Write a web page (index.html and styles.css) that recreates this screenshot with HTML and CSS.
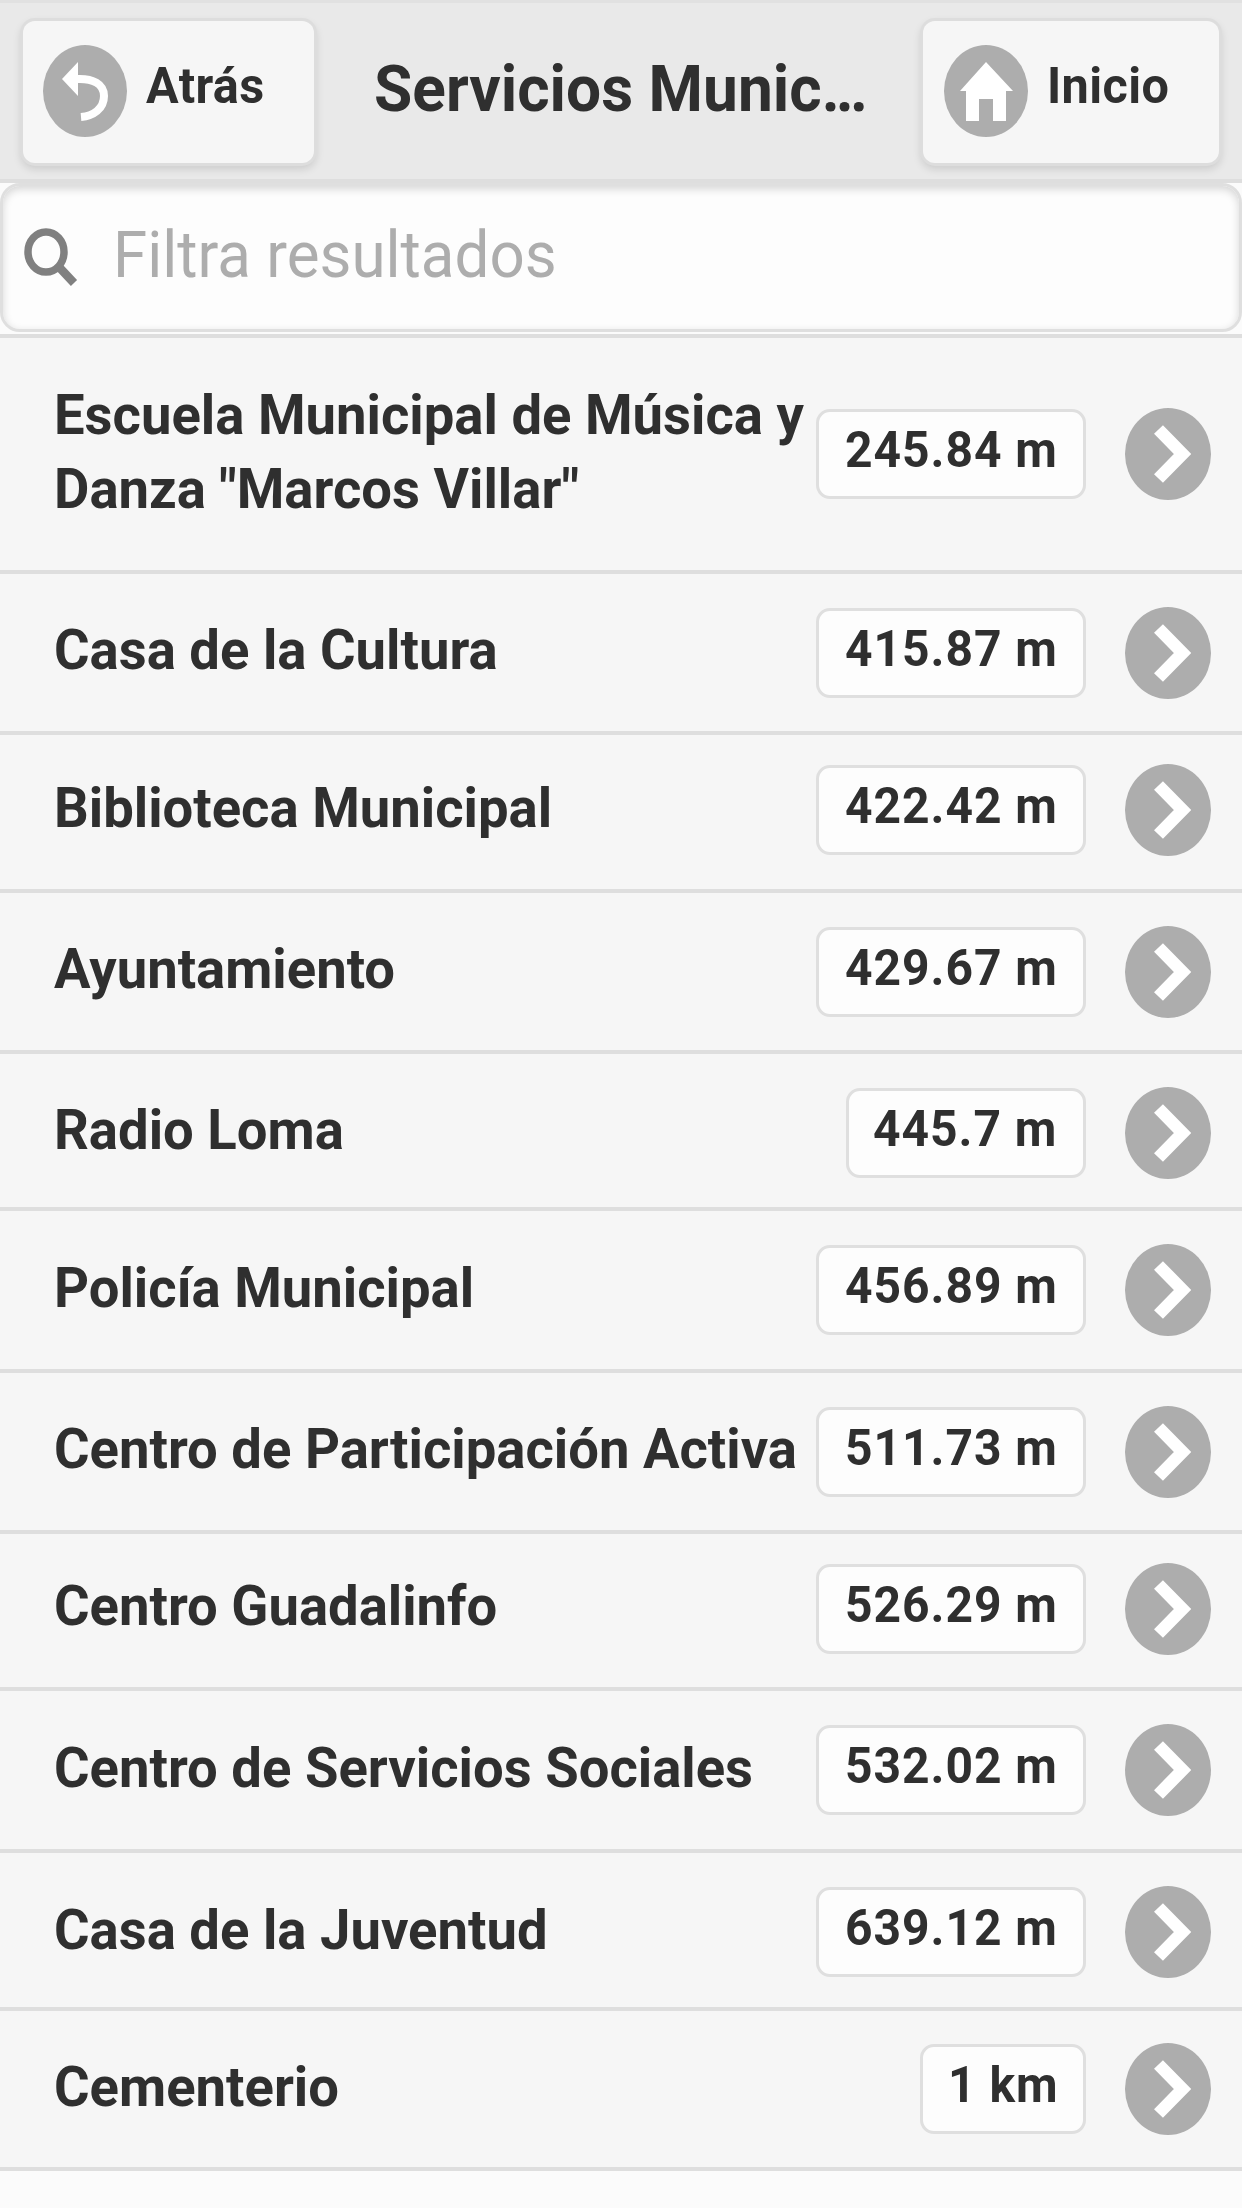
FILE: index.html
```html
<!DOCTYPE html>
<html lang="es">
<head>
<meta charset="utf-8">
<title>Servicios Municipales</title>
<link rel="stylesheet" href="styles.css">
</head>
<body>
<svg class="defs" aria-hidden="true">
  <symbol id="go" viewBox="0 0 86 92"><ellipse cx="43" cy="46" rx="43" ry="46" fill="#adadad"/><path d="M33.500 21.500 L57.500 46 L33.500 70.500" fill="none" stroke="#fff" stroke-width="12.500"/></symbol>
</svg>
<header class="bar">
  <a class="btn back">
    <svg class="disc" viewBox="0 0 84 92"><ellipse cx="42" cy="46" rx="42" ry="46" fill="#adadad"/><path d="M19 34 L35 17 V51 Z" fill="#fff"/><path d="M33 34 C50 33 61 39 61 51 C61 64 50 71 38 72" fill="none" stroke="#fff" stroke-width="8"/></svg>
    <span class="label">Atrás</span>
  </a>
  <h1 class="title"><span>Servicios Munic<i class="dots">...</i></span></h1>
  <a class="btn home">
    <svg class="disc" viewBox="0 0 84 92"><ellipse cx="42" cy="46" rx="42" ry="46" fill="#adadad"/><path d="M42 17 L69 46 H62 V76 H49 V54 H35 V76 H22 V46 H16 Z" fill="#fff"/></svg>
    <span class="label">Inicio</span>
  </a>
</header>
<div class="search">
  <svg class="lens" viewBox="0 0 54 60"><ellipse cx="22" cy="24" rx="18" ry="20" fill="none" stroke="#808080" stroke-width="7.500"/><path d="M34 38 L50 55" stroke="#808080" stroke-width="8.500"/></svg>
  <span class="hint">Filtra resultados</span>
</div>
<ul class="list">
  <li class="row"><span class="name">Escuela Municipal de Música y<br>Danza "Marcos Villar"</span><span class="count"><b>245.84 m</b></span><svg class="go"><use href="#go"/></svg></li>
  <li class="row"><span class="name">Casa de la Cultura</span><span class="count"><b>415.87 m</b></span><svg class="go"><use href="#go"/></svg></li>
  <li class="row raised"><span class="name">Biblioteca Municipal</span><span class="count"><b>422.42 m</b></span><svg class="go"><use href="#go"/></svg></li>
  <li class="row"><span class="name">Ayuntamiento</span><span class="count"><b>429.67 m</b></span><svg class="go"><use href="#go"/></svg></li>
  <li class="row lowered"><span class="name">Radio Loma</span><span class="count medium"><b>445.7 m</b></span><svg class="go"><use href="#go"/></svg></li>
  <li class="row"><span class="name">Policía Municipal</span><span class="count"><b>456.89 m</b></span><svg class="go"><use href="#go"/></svg></li>
  <li class="row"><span class="name">Centro de Participación Activa</span><span class="count"><b>511.73 m</b></span><svg class="go"><use href="#go"/></svg></li>
  <li class="row raised"><span class="name">Centro Guadalinfo</span><span class="count"><b>526.29 m</b></span><svg class="go"><use href="#go"/></svg></li>
  <li class="row"><span class="name">Centro de Servicios Sociales</span><span class="count"><b>532.02 m</b></span><svg class="go"><use href="#go"/></svg></li>
  <li class="row lowered"><span class="name">Casa de la Juventud</span><span class="count"><b>639.12 m</b></span><svg class="go"><use href="#go"/></svg></li>
  <li class="row"><span class="name">Cementerio</span><span class="count short"><b>1 km</b></span><svg class="go"><use href="#go"/></svg></li>
</ul>
</body>
</html>
```
FILE: styles.css
```css
* { box-sizing: border-box; }
body {
  margin: 0;
  min-height: 2208px;
  background: #fbfbfb;
  color: #2f2f2f;
  font-family: Roboto, "Liberation Sans", sans-serif;
  overflow: hidden;
}
.defs { display: none; }
.bar {
  display: flex;
  justify-content: space-between;
  align-items: flex-start;
  height: 183px;
  padding: 18px 23px 0 23px;
  background: #e9e9e9;
  border-top: 3px solid #e1e1e1;
  border-bottom: 4px solid #dedede;
}
.btn {
  display: flex;
  align-items: flex-start;
  height: 142px;
  padding: 24px 0 0 20px;
  background: #f6f6f6;
  border-radius: 12px;
  box-shadow: 0 0 0 3px #dddddd, 0 4px 8px 2px rgba(0, 0, 0, .13);
}
.back { width: 291px; }
.home { width: 296px; padding-left: 21px; }
.disc { width: 84px; height: 92px; flex: none; }
.label, .title span, .hint, .name, .count b {
  display: block;
  white-space: nowrap;
  transform: scaleX(.972);
  transform-origin: left top;
}
.label {
  margin: 12px 0 0 19px;
  font-size: 50px;
  line-height: 58px;
  font-weight: 700;
  letter-spacing: .4px;
}
.title {
  width: 490px;
  margin: 37px 0 0;
  font-size: 64px;
  line-height: 64px;
  font-weight: 700;
}
.dots { font-style: normal; letter-spacing: -4px; }
.search {
  display: flex;
  height: 149px;
  padding: 42px 0 0 21px;
  background: #fdfdfd;
  border: 3px solid #dfdfdf;
  border-radius: 20px;
  box-shadow: inset 0 3px 8px rgba(0, 0, 0, .16);
}
.lens { width: 54px; height: 60px; flex: none; }
.hint {
  margin: -3px 0 0 35px;
  font-size: 65px;
  line-height: 60px;
  transform: scaleX(.952);
  color: #adadad;
}
.list {
  display: grid;
  grid-template-rows: 236px 161px 158px 161px 157px 162px 161px 157px 162px 158px 164px;
  margin: 2px 0 0;
  padding: 0;
  list-style: none;
}
.row {
  display: flex;
  align-items: center;
  padding: 0 31px 0 54px;
  background: #f6f6f6;
  border-top: 4px solid #dedede;
}
.row:last-child { border-bottom: 4px solid #dedede; }
.raised { padding-bottom: 4px; }
.lowered { padding-top: 4px; }
.name {
  width: 762px;
  padding-bottom: 5px;
  font-size: 56px;
  line-height: 74px;
  font-weight: 700;
}
.count {
  width: 270px;
  height: 90px;
  margin: 0 39px 0 auto;
  padding: 0 0 0 26px;
  background: #fdfdfd;
  border: 3px solid #dfdfdf;
  border-radius: 14px;
  font-size: 50px;
  line-height: 77px;
  letter-spacing: 1px;
}
.count b { transform: scaleX(.96); }
.medium { width: 240px; padding-left: 24px; }
.short { width: 166px; padding-left: 25px; }
.go { width: 86px; height: 92px; flex: none; }
```
